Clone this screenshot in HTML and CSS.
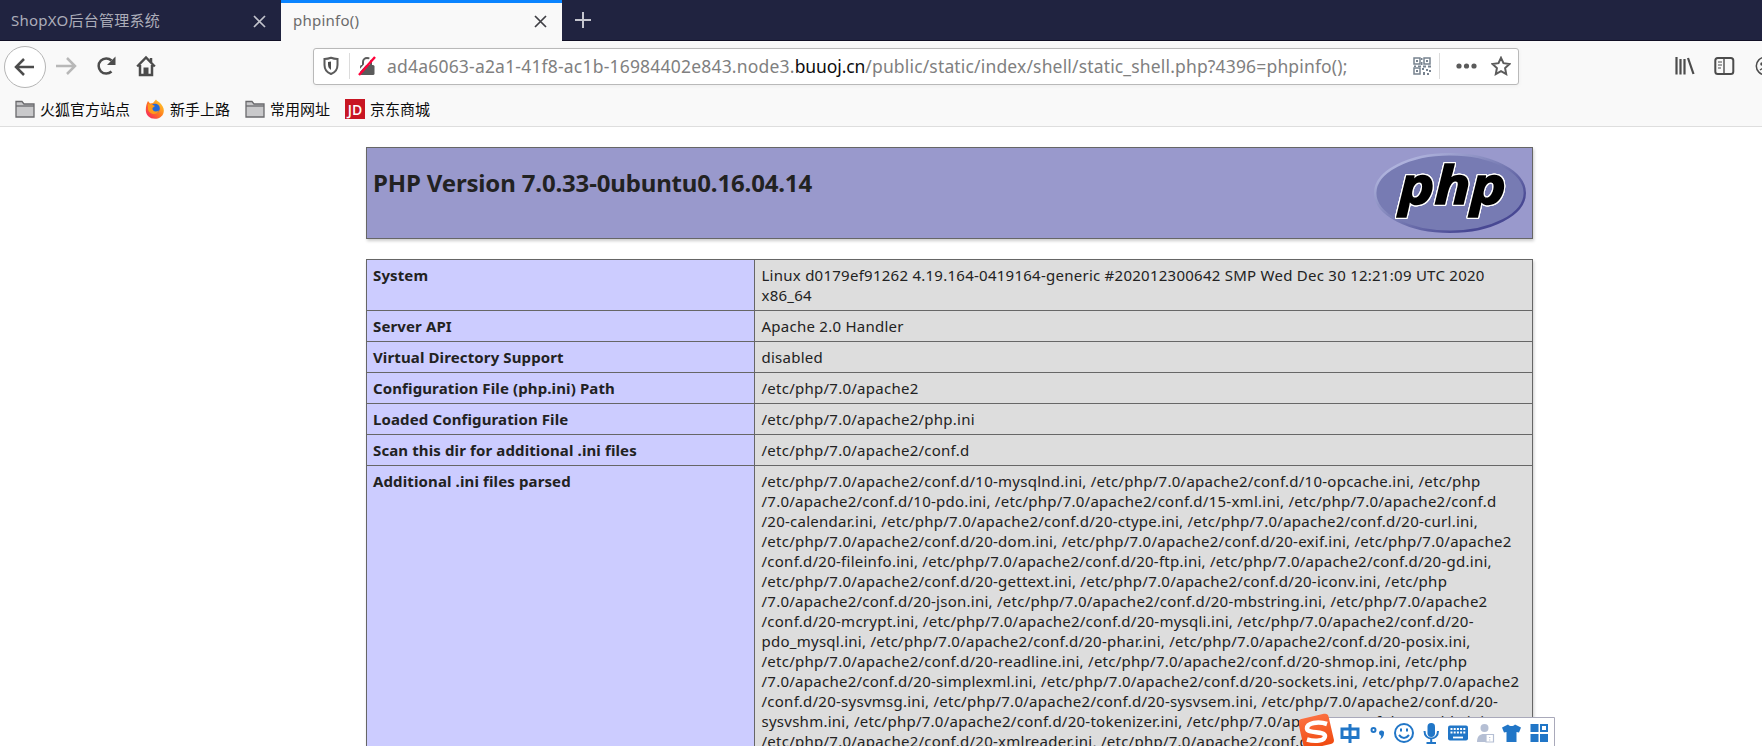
FILE: index.html
```
<!DOCTYPE html>
<html lang="zh-CN">
<head>
<meta charset="utf-8">
<title>phpinfo()</title>
<link rel="stylesheet" href="styles.css">
</head>
<body>
<div class="window">
  <div class="tabs">
    <div class="tab tab-idle"><span class="tab-title t-shop">ShopXO后台管理系统</span><svg class="close" width="13" height="13" viewBox="0 0 13 13"><path d="M1 1l11 11M12 1L1 12"/></svg></div>
    <div class="tab tab-active"><span class="tab-title">phpinfo()</span><svg class="close" width="13" height="13" viewBox="0 0 13 13"><path d="M1 1l11 11M12 1L1 12"/></svg></div>
    <svg class="plus" width="18" height="18" viewBox="0 0 18 18"><path d="M9 1v16M1 9h16"/></svg>
  </div>
  <div class="nav">
    <div class="back"><svg width="22" height="20" viewBox="0 0 22 20"><path d="M20 10H2M10 2L2 10l8 8"/></svg></div>
    <svg class="fwd" width="22" height="20" viewBox="0 0 22 20"><path d="M1 10h18M12 2l8 8-8 8"/></svg>
    <svg class="reload" width="20" height="20" viewBox="0 0 20 20"><path class="ln" d="M15.500 4.500A7.600 7.600 0 1 0 15.500 15.500"/><path class="fl" d="M19.500 .5v8.500h-8.500z"/></svg>
    <svg class="home" width="20" height="22" viewBox="0 0 20 22"><path class="ln" d="M1.200 11.500L10 2.500l8.800 9"/><path class="ln" d="M4 10v10h12V10M15 3v4"/><path class="fl" d="M7.500 12.500h5V20h-5z"/></svg>
    <div class="urlbar">
      <svg class="shield" width="16" height="20" viewBox="0 0 16 20"><path d="M8 1.800C5.500 2.800 3 3 1.500 3V9c0 5 2.500 7.500 6.500 9 4-1.500 6.500-4 6.500-9V3C13 3 10.500 2.800 8 1.800z"/><path class="fl" d="M8 5.500v8.500C6 12.500 5 11 5 8.500V6z"/></svg>
      <i class="sep"></i>
      <svg class="lock" width="18" height="20" viewBox="0 0 18 20"><path class="shackle" d="M5 10V6a4 4 0 0 1 8 0v4"/><rect x="2" y="9" width="14.500" height="10" rx="1.500"/><path class="gap" d="M-.5 17L15 0"/><path class="slash" d="M1 19L17 1"/></svg>
      <span class="url"><span class="u1">ad4a6063-a2a1-41f8-ac1b-16984402e843.node3.</span><b>buuoj.cn</b><span class="u2">/public/static/index/shell/static_shell.php?4396=phpinfo();</span></span>
      <svg class="qr" width="18" height="18" viewBox="0 0 18 18"><path class="q" d="M1 1h6v6H1zM11 1h6v6h-6zM1 11h6v6H1z"/><path class="d" d="M3 3h2v2H3zM13 3h2v2h-2zM3 13h2v2H3zM8 1h1.500v2H8zM8 5h1.500v3H8zM1 8.500h2v1.500H1zM5 8.500h3V10H5zM10 8.500h3v2h-3zM15 8.500h3v2h-3zM9 11h2v2H9zM13 12h2v2h-2zM16 13h2v2h-2zM10 15h2v3h-2zM14 16h2v2h-2z"/></svg>
      <i class="sep sep2"></i>
      <svg class="dots" width="22" height="6" viewBox="0 0 22 6"><circle cx="3" cy="3" r="2.600"/><circle cx="10.500" cy="3" r="2.600"/><circle cx="18" cy="3" r="2.600"/></svg>
      <svg class="star" width="20" height="20" viewBox="0 0 20 20"><path d="M10 1.800l2.500 5.400 6 .8-4.400 4.100 1.100 6L10 15.200l-5.200 2.900 1.100-6L1.500 8l6-.8z"/></svg>
    </div>
    <svg class="lib" width="20" height="20" viewBox="0 0 20 20"><path d="M1.500 1v17.500M5.500 3v15.500M9.500 3v15.500M13 2l5.500 16"/></svg>
    <svg class="side" width="21" height="20" viewBox="0 0 21 20"><rect x="1.300" y="2" width="18" height="16" rx="2.500"/><path class="mid" d="M10 2v16"/><path class="th" d="M4 6h4M4 9h4M4 12h3"/></svg>
    <svg class="acct" width="20" height="20" viewBox="0 0 20 20"><circle cx="10" cy="10" r="8.700"/><circle class="fl" cx="7" cy="8" r="1.800"/><path d="M5 14q5-4 10 0"/></svg>
  </div>
  <div class="marks">
    <svg class="folder" width="20" height="18" viewBox="0 0 20 18"><path d="M1 17V1.500h6l2 2.500h10v13z"/><path d="M1 6h18"/></svg><span>火狐官方站点</span>
    <svg class="fox" width="20" height="20" viewBox="0 0 20 20"><defs><linearGradient id="fire" x1="1" y1="0" x2="0" y2="1"><stop offset="0" stop-color="#ffe12e"/><stop offset=".5" stop-color="#ff7a20"/><stop offset="1" stop-color="#f5156c"/></linearGradient></defs><path d="M3 2l2 2.500c1 0 2-.5 3-.5l3-3.500c1 2 3 2 5 4.500 2.500 3 3.500 6 2.500 9-1 3.500-4.500 5.800-8.500 5.800C4.500 19.800.8 16 .8 11 .8 7 1.800 4 3 2z" fill="url(#fire)"/><circle cx="10" cy="9.500" r="4.800" fill="#2469d8"/><path d="M3 5l4 .5 3 1.500-2.500 2c-.5 3.500 3.500 4.500 6.500 2.500-1.500 5-9.500 4.500-11-1z" fill="#ff9a1c"/></svg><span>新手上路</span>
    <svg class="folder" width="20" height="18" viewBox="0 0 20 18"><path d="M1 17V1.500h6l2 2.500h10v13z"/><path d="M1 6h18"/></svg><span>常用网址</span>
    <em class="jd">JD</em><span>京东商城</span>
  </div>
  <main class="page">
    <header class="head">
      <h1>PHP Version 7.0.33-0ubuntu0.16.04.14</h1>
      <svg class="logo" width="152" height="80" viewBox="0 0 152 80">
        <defs><linearGradient id="rim" x1="0" y1="0" x2="1" y2="1"><stop offset=".15" stop-color="#aeb2dc"/><stop offset=".5" stop-color="#777bb3"/><stop offset=".8" stop-color="#484893"/></linearGradient></defs>
        <ellipse cx="76" cy="40" rx="74.800" ry="38.800" fill="#777bb3" stroke="url(#rim)" stroke-width="2.400"/>
        <text x="25" y="51" textLength="107" lengthAdjust="spacingAndGlyphs">php</text>
      </svg>
    </header>
    <table>
      <tr><th>System</th><td>Linux d0179ef91262 4.19.164-0419164-generic #202012300642 SMP Wed Dec 30 12:21:09 UTC 2020<br>x86_64</td></tr>
      <tr><th>Server API</th><td>Apache 2.0 Handler</td></tr>
      <tr><th>Virtual Directory Support</th><td>disabled</td></tr>
      <tr><th>Configuration File (php.ini) Path</th><td>/etc/php/7.0/apache2</td></tr>
      <tr><th>Loaded Configuration File</th><td>/etc/php/7.0/apache2/php.ini</td></tr>
      <tr><th>Scan this dir for additional .ini files</th><td>/etc/php/7.0/apache2/conf.d</td></tr>
      <tr><th>Additional .ini files parsed</th><td>/etc/php/7.0/apache2/conf.d/10-mysqlnd.ini, /etc/php/7.0/apache2/conf.d/10-opcache.ini, /etc/php<br>/7.0/apache2/conf.d/10-pdo.ini, /etc/php/7.0/apache2/conf.d/15-xml.ini, /etc/php/7.0/apache2/conf.d<br>/20-calendar.ini, /etc/php/7.0/apache2/conf.d/20-ctype.ini, /etc/php/7.0/apache2/conf.d/20-curl.ini,<br>/etc/php/7.0/apache2/conf.d/20-dom.ini, /etc/php/7.0/apache2/conf.d/20-exif.ini, /etc/php/7.0/apache2<br>/conf.d/20-fileinfo.ini, /etc/php/7.0/apache2/conf.d/20-ftp.ini, /etc/php/7.0/apache2/conf.d/20-gd.ini,<br>/etc/php/7.0/apache2/conf.d/20-gettext.ini, /etc/php/7.0/apache2/conf.d/20-iconv.ini, /etc/php<br>/7.0/apache2/conf.d/20-json.ini, /etc/php/7.0/apache2/conf.d/20-mbstring.ini, /etc/php/7.0/apache2<br>/conf.d/20-mcrypt.ini, /etc/php/7.0/apache2/conf.d/20-mysqli.ini, /etc/php/7.0/apache2/conf.d/20-<br>pdo_mysql.ini, /etc/php/7.0/apache2/conf.d/20-phar.ini, /etc/php/7.0/apache2/conf.d/20-posix.ini,<br>/etc/php/7.0/apache2/conf.d/20-readline.ini, /etc/php/7.0/apache2/conf.d/20-shmop.ini, /etc/php<br>/7.0/apache2/conf.d/20-simplexml.ini, /etc/php/7.0/apache2/conf.d/20-sockets.ini, /etc/php/7.0/apache2<br>/conf.d/20-sysvmsg.ini, /etc/php/7.0/apache2/conf.d/20-sysvsem.ini, /etc/php/7.0/apache2/conf.d/20-<br>sysvshm.ini, /etc/php/7.0/apache2/conf.d/20-tokenizer.ini, /etc/php/7.0/apache2/conf.d/20-wddx.ini,<br>/etc/php/7.0/apache2/conf.d/20-xmlreader.ini, /etc/php/7.0/apache2/conf.d/20-xmlrpc.ini,</td></tr>
    </table>
  </main>
  <div class="ime">
    <svg width="256" height="34" viewBox="0 0 256 34">
      <defs><linearGradient id="so" x1="0" y1="0" x2="0" y2="1"><stop offset="0" stop-color="#fb7040"/><stop offset="1" stop-color="#f04a10"/></linearGradient></defs>
      <path class="frame" d="M20 4.500h235.500V40H20z"/>
      <rect x="1.500" y="3" width="31" height="31" rx="4" fill="url(#so)" stroke="none" transform="rotate(-13 17 18)"/>
      <path class="s" d="M28 11C19 8 8 10 8 15.500c0 5.500 18 2 18 7.500 0 5-10 6-18 3.500"/>
      <path class="b3" d="M43 16h16v8.500H43zM51 11v19"/>
      <circle class="b2" cx="74.500" cy="17" r="2"/><path class="bf" d="M80 19.500a2.500 2.500 0 1 1 5 1c0 3-2 5-4 6 1-2 1.500-3 1-4-1 0-2-1-2-3z"/>
      <circle class="b2" cx="105" cy="20" r="9"/><path class="b2" d="M100 22q5 6 10 0M102 15.500v3M108 15.500v3"/>
      <rect class="bf" x="128.500" y="10" width="7.500" height="14" rx="3.700"/><path class="b2" d="M125.500 18c0 10 13.500 10 13.500 0M132.200 26v4M127.500 30h9.500"/>
      <rect class="bf" x="149" y="12.500" width="20" height="15" rx="2"/><path class="kw" d="M151.500 16h15M151.500 19.500h15"/><path class="k" d="M154 24.500h10"/>
      <circle class="gy" cx="185.500" cy="15" r="4"/><path class="gy" d="M178 29c0-6 3-8 7-8s6 2 6 8z"/><path class="cd" d="M187 21.500h7.500v7.500H187zM190.700 24v1M190.700 26.500v1"/>
      <path class="bf" d="M209 11.500c2 2 5 2 7 0l6 3-2 5-2.500-.5v10h-10V19l-2.500.5-2-5z"/>
      <path class="bf" d="M231.500 11h8v8h-8zM231.500 21h8v8h-8zM241 21h8v8h-8z"/><path class="b2" d="M242 12h6v6h-6z"/>
    </svg>
  </div>
</div>
</body>
</html>
```
FILE: styles.css
```
* { box-sizing: border-box; }
body { margin: 0; background: #fff; font-family: "Noto Sans", "Noto Sans CJK SC", sans-serif; }
svg { display: block; flex: none; fill: none; stroke: #4c4c4c; stroke-width: 2; }
.window { width: 1762px; height: 746px; overflow: hidden; position: relative; }
.tabs { height: 41px; background: #202340; display: flex; border-bottom: 1px solid #100f25; }
.tab { width: 281px; height: 41px; display: flex; align-items: center; justify-content: space-between; padding: 0 15px 2px 11px; font-size: 15px; letter-spacing: .25px; }
.tab-active { color: #6b6b6b; background: #f9f9f9; border-top: 3px solid #0a84ff; padding: 0 15px 4px 12px; }
.tab-idle { color: #acadb9; }
.close { stroke-width: 1.700; stroke: #3f3f44; margin-top: 3px; }
.tab-idle .close { stroke: #c2c3cc; }
.plus { stroke: #c5c6cf; margin: 11px 0 0 12px; }
.nav { height: 50px; background: #f9f9f9; display: flex; align-items: center; overflow: hidden; }
.back { flex: none; width: 42px; height: 42px; margin: 1px 0 0 4px; border: 1px solid #b5b5b5; border-radius: 50%; background: #fff; display: flex; align-items: center; justify-content: center; }
.back svg { stroke-width: 2.500; }
.fwd { margin-left: 9px; stroke: #b8b8b8; stroke-width: 2.500; }
.reload { margin-left: 19px; }
.home { margin-left: 20px; }
.ln { stroke-width: 2.500; }
.fl { fill: #4c4c4c; stroke: none; }
.urlbar { flex: none; width: 1206px; height: 37px; margin-left: 157px; border: 1px solid #b9b9b9; border-radius: 3px; background: #fff; display: flex; align-items: center; box-shadow: 0 1px 4px rgba(0,0,0,.05); }
.urlbar svg { stroke: #5b5b5b; }
.urlbar .fl { stroke: none; }
.shield { margin-left: 9px; }
.sep { flex: none; width: 1px; height: 26px; background: #dcdcdc; margin: 0 8px 0 10px; }
.lock rect { fill: #5b5b5b; stroke: none; }
.lock .gap { stroke: #fff; stroke-width: 2; }
.lock .slash { stroke: #ff0039; stroke-width: 2.400; }
.url { flex: none; width: 1013px; margin-left: 11px; margin-right: 13px; font-size: 17.500px; white-space: nowrap; color: #808080; }
.u1 { letter-spacing: .2px; }
.u2 { letter-spacing: .16px; }
.url b { font-weight: 400; color: #0c0c0d; letter-spacing: -.1px; }
.urlbar .qr { stroke: #77828f; stroke-width: 1.500; }
.qr .d { fill: #77828f; stroke: none; }
.sep2 { margin: 0 16px 0 8px; }
.urlbar .dots { fill: #5b5b5b; stroke: none; }
.star { margin-left: 13px; }
.lib { margin-left: 156px; stroke-width: 2.200; }
.side { margin-left: 19px; }
.side .th { stroke-width: 1; }
.side .mid { stroke-width: 1.400; }
.acct { margin-left: 20px; stroke-width: 1.500; }
.marks { height: 36px; background: #f9f9f9; border-bottom: 1px solid #dedede; display: flex; align-items: center; font: 15px "Noto Sans CJK SC", sans-serif; color: #0c0c0d; }
.marks span { margin: -1px 15px 0 5px; }
.folder { fill: #c9c9cb; stroke: #6a6a6d; stroke-width: 1.300; }
.marks .folder:first-child { margin-left: 15px; }
.fox { stroke: none; }
.jd { width: 20px; height: 20px; background: #c81623; color: #fff; font: 600 14px/21px "Open Sans", sans-serif; text-align: center; }
.page { width: 1167px; margin: 20px 0 0 366px; color: #222; }
.head { height: 92px; border: 1px solid #666; background: #99c; box-shadow: 1px 2px 3px #ccc; display: flex; justify-content: space-between; padding: 5px 6px; }
h1 { margin: 14px 0 0; font-size: 24px; line-height: 32px; white-space: nowrap; letter-spacing: -.16px; }
.logo { stroke: none; overflow: visible; }
.logo text { font: italic 700 52px "Open Sans", sans-serif; fill: #000; stroke: #000; stroke-width: 1.500; filter: drop-shadow(1px 0 0 #fff) drop-shadow(-1px 0 0 #fff) drop-shadow(0 1px 0 #fff) drop-shadow(0 -1px 0 #fff) drop-shadow(0 0 .5px #fff); }
table { width: 1167px; margin-top: 20px; border-collapse: collapse; table-layout: fixed; box-shadow: 1px 2px 3px #ccc; font-size: 15px; line-height: 20px; }
th, td { border: 1px solid #666; padding: 5px 6px; text-align: left; vertical-align: top; white-space: nowrap; }
th { width: 388px; background: #ccf; letter-spacing: .12px; }
td { background: #ddd; padding-left: 6.500px; letter-spacing: .255px; }
.ime { position: absolute; left: 1299px; top: 713px; }
.frame { fill: #fff; stroke: #a9a9ba; stroke-width: 1; }
.s { stroke: #fff; stroke-width: 4.500; }
.b2 { stroke: #2176c7; stroke-width: 2; }
.b3 { stroke: #2176c7; stroke-width: 3; }
.bf { fill: #2176c7; stroke: none; }
.kw { stroke: #fff; stroke-width: 1.800; stroke-dasharray: 2 1.200; }
.k { stroke: #fff; stroke-width: 1.800; }
.gy { fill: #b5bfd4; stroke: none; }
.cd { fill: #fff; stroke: #b5bfd4; stroke-width: 1.200; }
```
